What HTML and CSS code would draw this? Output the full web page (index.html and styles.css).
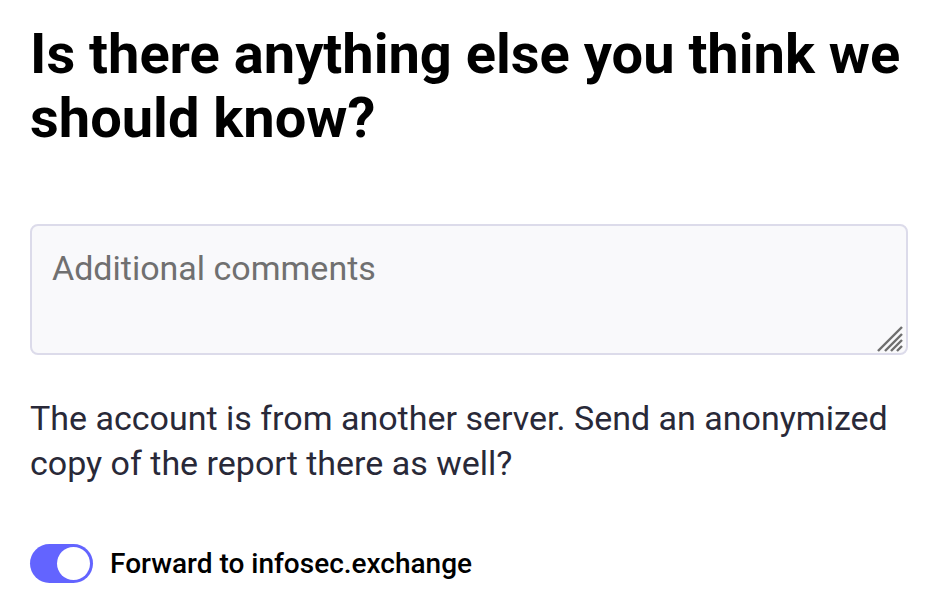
FILE: index.html
```html
<!DOCTYPE html>
<html lang="en">
<head>
<meta charset="utf-8">
<title>Report</title>
<link rel="stylesheet" href="styles.css">
</head>
<body>
<main class="report">
  <h3 class="report__title">Is there anything else you think we should know?</h3>
  <div class="report__field">
    <textarea class="report__textarea" placeholder="Additional comments"></textarea>
    <svg class="report__grip" width="28" height="28" viewBox="0 0 28 28" aria-hidden="true">
      <g stroke="#6e6e6e" stroke-width="2.4" stroke-linecap="butt">
        <line x1="1" y1="27" x2="25" y2="3"/>
        <line x1="8" y1="27" x2="25" y2="10"/>
        <line x1="14" y1="27" x2="25" y2="16"/>
        <line x1="20" y1="27" x2="25" y2="22"/>
      </g>
    </svg>
  </div>
  <p class="report__lead">The account is from another server. Send an anonymized copy of the report there as well?</p>
  <label class="report__toggle">
    <span class="toggle"><span class="toggle__thumb"></span></span>
    <span class="toggle__label">Forward to infosec.exchange</span>
  </label>
</main>
</body>
</html>
```

FILE: styles.css
```css
html, body {
  margin: 0;
  padding: 0;
  background: #ffffff;
}

.report {
  font-family: Roboto, "Liberation Sans", sans-serif;
  padding: 22px 42px 0 30px;
}

.report__title {
  margin: 0;
  font-size: 56px;
  line-height: 64px;
  font-weight: 700;
  color: #000000;
}

.report__field {
  position: relative;
  margin-top: 74px;
}

.report__textarea {
  display: block;
  box-sizing: border-box;
  width: 100%;
  height: 131px;
  margin: 0;
  padding: 20px 20px;
  border: 2px solid #dcdbea;
  border-radius: 8px;
  background: #f9f9fb;
  font-family: Roboto, "Liberation Sans", sans-serif;
  font-size: 34px;
  line-height: 44px;
  color: #000;
  resize: none;
  outline: none;
}

.report__textarea::placeholder {
  color: #707070;
  opacity: 1;
}

.report__grip {
  position: absolute;
  right: 3px;
  bottom: 3px;
}

.report__lead {
  margin: 41px 0 0;
  font-size: 34px;
  line-height: 45px;
  color: #292938;
}

.report__toggle {
  display: flex;
  align-items: center;
  gap: 17px;
  margin-top: 58px;
}

.toggle {
  position: relative;
  box-sizing: border-box;
  width: 63px;
  height: 39px;
  border-radius: 20px;
  background: #6364ff;
  flex: none;
}

.toggle__thumb {
  position: absolute;
  top: 3px;
  right: 3px;
  width: 33px;
  height: 33px;
  border-radius: 50%;
  background: #ffffff;
}

.toggle__label {
  font-size: 28px;
  font-weight: 500;
  color: #000000;
}
```
